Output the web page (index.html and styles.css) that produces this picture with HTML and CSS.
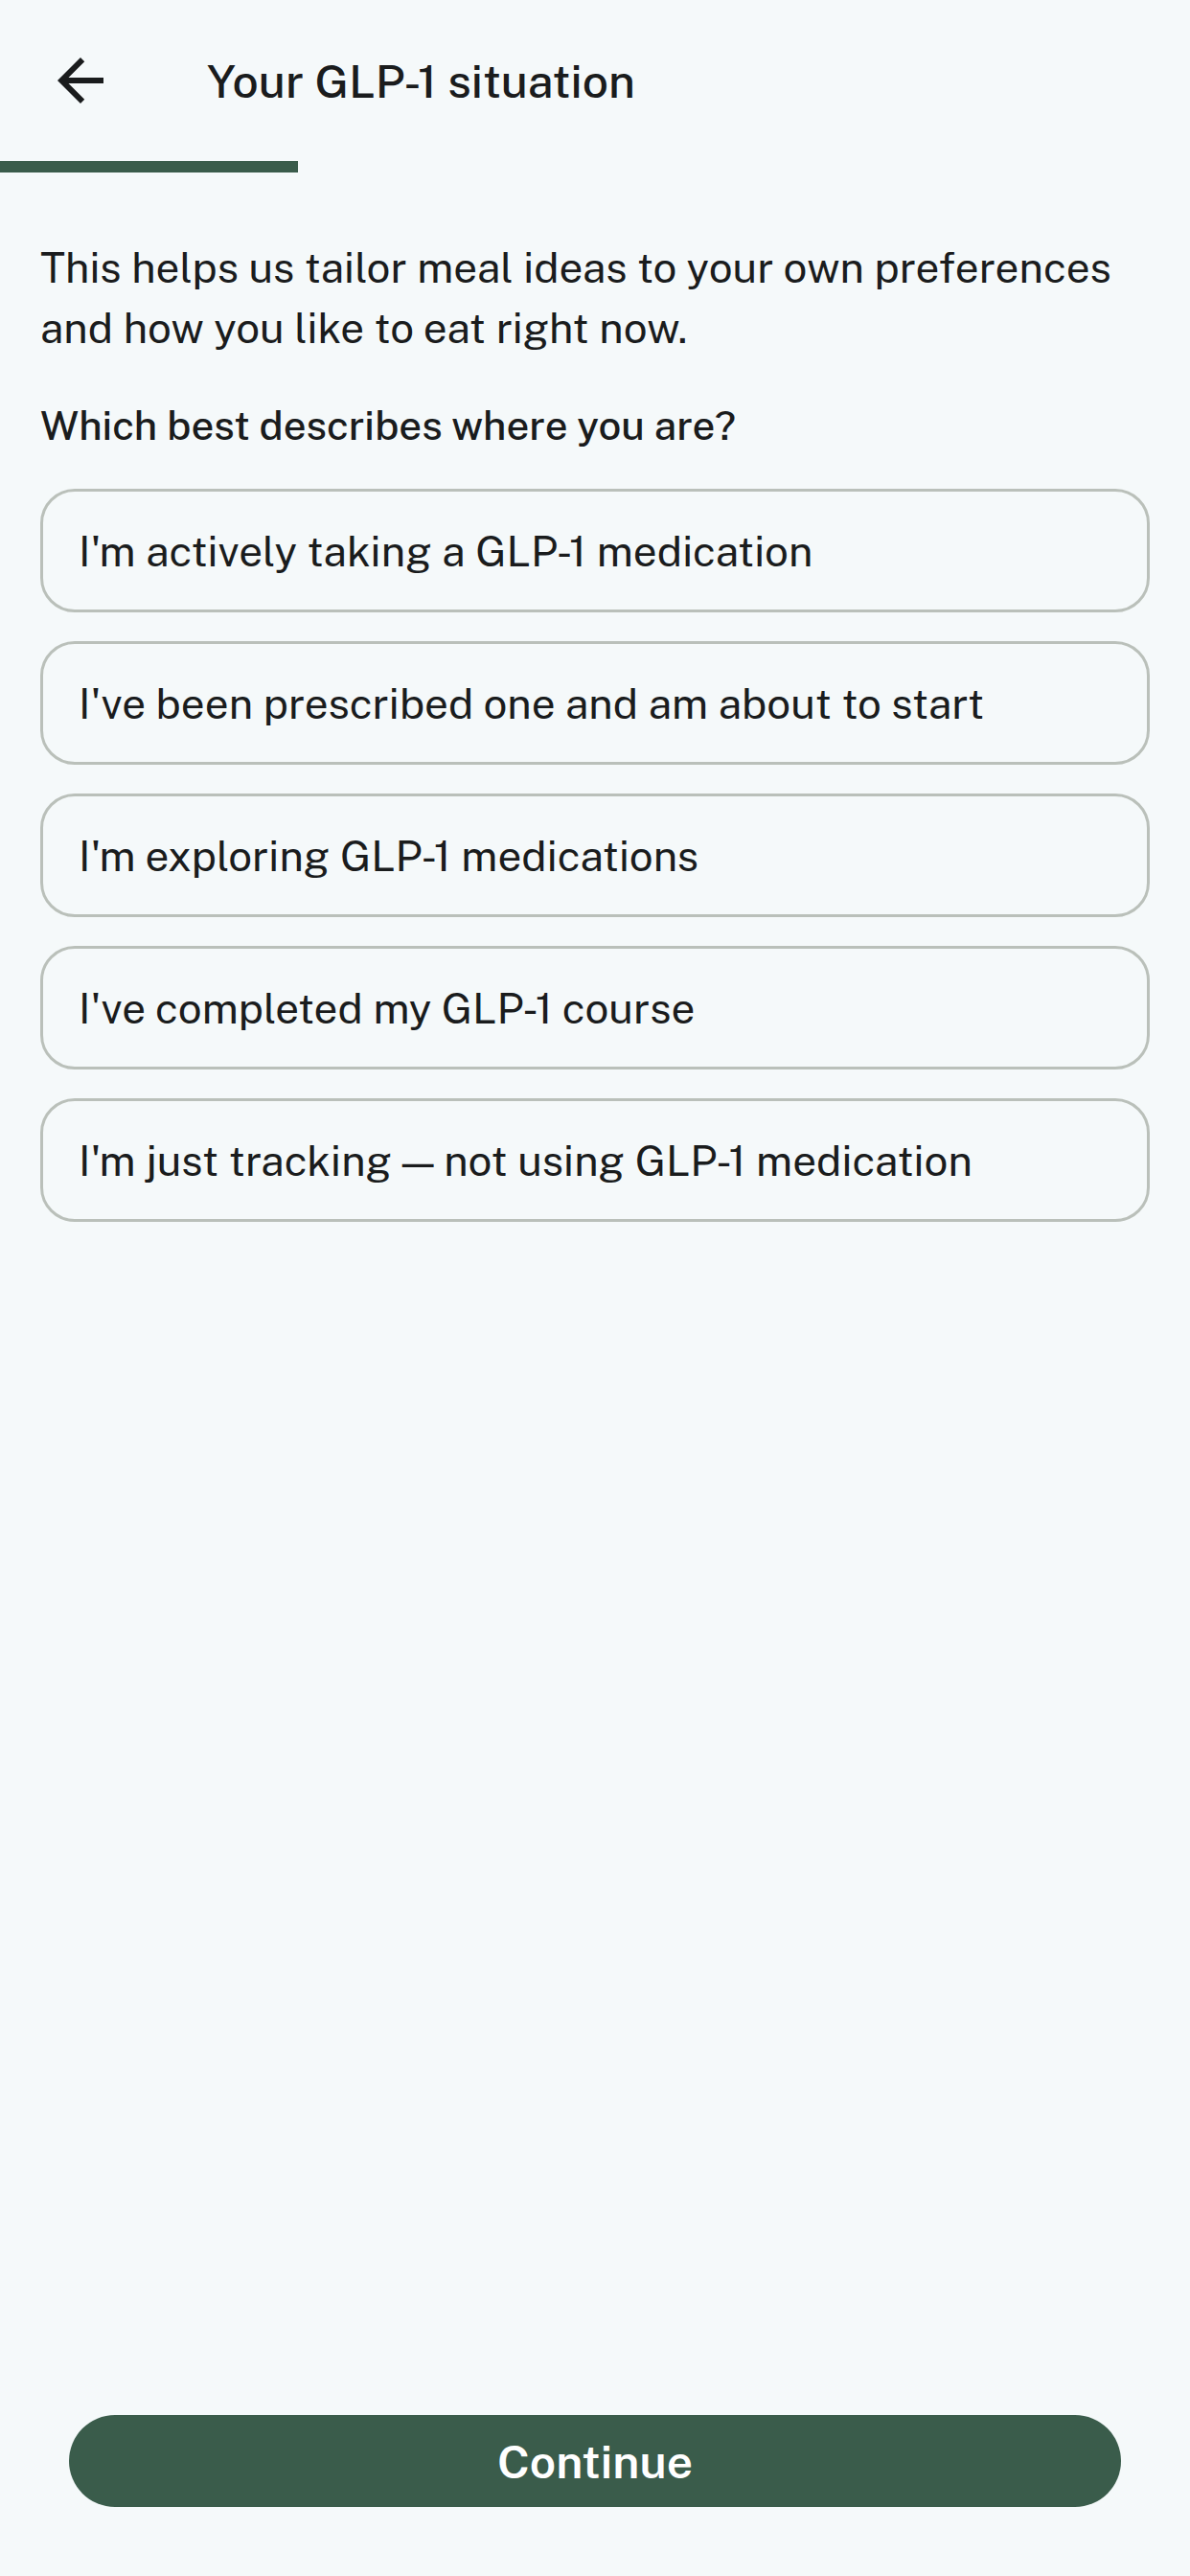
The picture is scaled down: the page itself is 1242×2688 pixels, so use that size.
FILE: index.html
```html
<!DOCTYPE html>
<html lang="en">
<head>
<meta charset="utf-8">
<meta name="viewport" content="width=device-width, initial-scale=1">
<title>Your GLP-1 situation</title>
<link rel="stylesheet" href="styles.css">
</head>
<body>
<header class="topbar">
  <button class="back" type="button" aria-label="Back">
    <svg viewBox="0 0 24 24" aria-hidden="true"><path d="M20 11H7.83l5.59-5.59L12 4l-8 8 8 8 1.41-1.41L7.83 13H20v-2z"/></svg>
  </button>
  <h1 class="title">Your GLP-1 situation</h1>
</header>
<div class="progress" role="progressbar" aria-label="Setup progress" aria-valuemin="0" aria-valuemax="100" aria-valuenow="25"><div class="progress-fill" style="width:25%"></div></div>
<main class="content">
  <p class="intro">This helps us tailor meal ideas to your own preferences and how you like to eat right now.</p>
  <h2 class="question">Which best describes where you are?</h2>
  <div class="options">
    <button class="option" type="button">I'm actively taking a GLP-1 medication</button>
    <button class="option" type="button">I've been prescribed one and am about to start</button>
    <button class="option" type="button">I'm exploring GLP-1 medications</button>
    <button class="option" type="button">I've completed my GLP-1 course</button>
    <button class="option" type="button">I'm just tracking — not using GLP-1 medication</button>
  </div>
</main>
<footer class="footer">
  <button class="continue" type="button">Continue</button>
</footer>
</body>
</html>
```

FILE: styles.css
```css
* { box-sizing: border-box; }

body {
  margin: 0;
  min-height: 100vh;
  display: flex;
  flex-direction: column;
  background: #f5f9fa;
  color: #1a1c1d;
  font-family: "Public Sans", Inter, "Liberation Sans", sans-serif;
}

button {
  font: inherit;
  color: inherit;
  cursor: pointer;
}

.topbar {
  height: 168px;
  display: flex;
  align-items: center;
  gap: 72px;
  padding: 0 24px;
}

.back {
  width: 120px;
  height: 120px;
  display: grid;
  place-items: center;
  border: 0;
  background: none;
  padding: 0;
}

.back svg {
  width: 72px;
  height: 72px;
  fill: currentColor;
}

.title {
  margin: 0;
  font-size: 48px;
  font-weight: 500;
}

.progress { height: 12px; }

.progress-fill {
  height: 100%;
  background: #3a5c4b;
}

.content {
  flex: 1;
  padding: 68px 42px;
}

.intro {
  margin: 0;
  font-size: 44px;
  line-height: 63px;
}

.question {
  margin: 40px 0 36px;
  font-size: 42px;
  font-weight: 500;
  line-height: 60px;
}

.options {
  display: grid;
  gap: 30px;
}

.option {
  min-height: 129px;
  padding: 0 37px;
  border: 3px solid #bac0ba;
  border-radius: 36px;
  background: none;
  font-size: 44px;
  text-align: left;
}

.footer { padding: 0 72px 72px; }

.continue {
  width: 100%;
  height: 96px;
  border: 0;
  border-radius: 48px;
  background: #3a5c4b;
  color: #fff;
  font-size: 48px;
  font-weight: 600;
}
```
